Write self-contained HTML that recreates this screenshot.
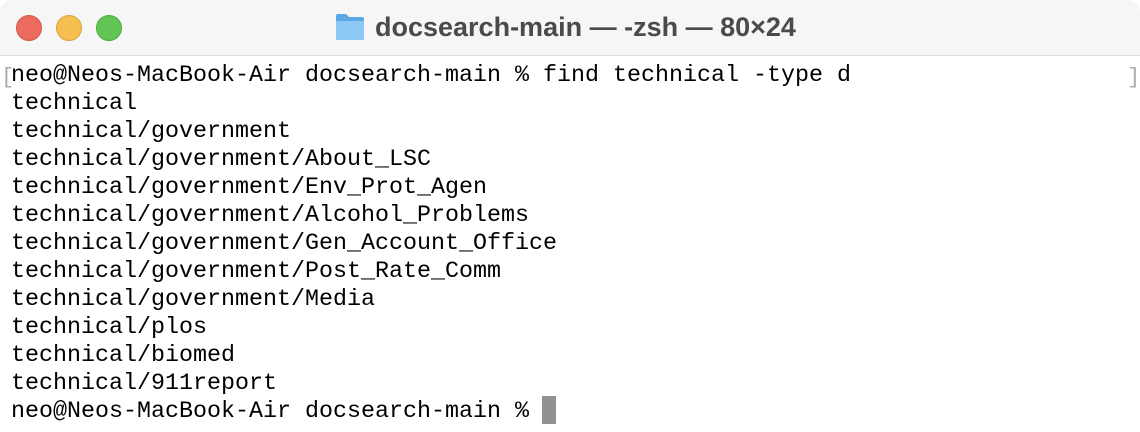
<!DOCTYPE html>
<html><head><meta charset="utf-8"><style>
html,body{margin:0;padding:0;width:1140px;height:432px;overflow:hidden;background:#fff}
.bar{position:absolute;left:0;top:0;width:1140px;height:55px;background:#f6f6f6;border-bottom:1px solid #dcdcdc;border-radius:12px 12px 0 0}
.dot{position:absolute;top:15px;width:24px;height:24px;border-radius:50%}
.title{position:absolute;left:375px;top:12px;font:bold 27px "Liberation Sans",sans-serif;color:#4a4a4a;white-space:nowrap}
pre{position:absolute;left:11px;top:62px;margin:0;font:23.33px/28px "Liberation Mono",monospace;color:#000}
.cur{position:absolute;left:542px;top:396px;width:14px;height:28px;background:#929292}
.br{position:absolute;top:65px;font:22px "Liberation Mono",monospace;color:#aaa}
</style></head><body>
<div class="bar">
<div class="dot" style="left:16px;background:#ed6a5e;border:0.5px solid #d4574c"></div>
<div class="dot" style="left:56px;background:#f5bf4f;border:0.5px solid #d9a33d"></div>
<div class="dot" style="left:96px;background:#61c554;border:0.5px solid #4ea942"></div>
<svg style="position:absolute;left:335px;top:13px" width="30" height="28" viewBox="0 0 30 28"><path d="M1 3a2 2 0 0 1 2-2h8l3 3h13a2 2 0 0 1 2 2v19a2 2 0 0 1-2 2H3a2 2 0 0 1-2-2z" fill="#5aa9e6"/><path d="M1 8h28v17a2 2 0 0 1-2 2H3a2 2 0 0 1-2-2z" fill="#8cc8f4"/></svg>
<div class="title">docsearch-main — -zsh — 80×24</div>
</div>
<div class="br" style="left:1px">[</div>
<div class="br" style="left:1127px">]</div>
<pre>neo@Neos-MacBook-Air docsearch-main % find technical -type d
technical
technical/government
technical/government/About_LSC
technical/government/Env_Prot_Agen
technical/government/Alcohol_Problems
technical/government/Gen_Account_Office
technical/government/Post_Rate_Comm
technical/government/Media
technical/plos
technical/biomed
technical/911report
neo@Neos-MacBook-Air docsearch-main % </pre>
<div class="cur"></div>
</body></html>
